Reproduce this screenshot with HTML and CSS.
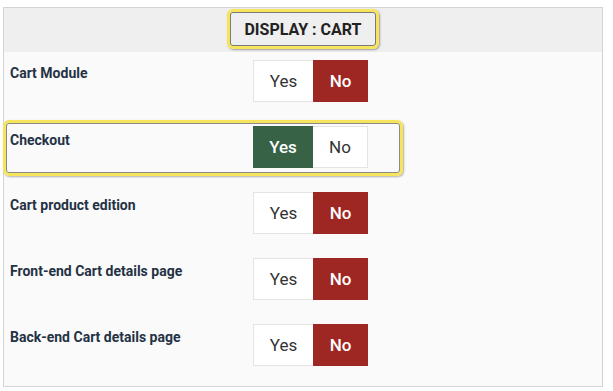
FILE: index.html
```html
<!DOCTYPE html>
<html lang="en">
<head>
    <meta charset="UTF-8">
    <meta name="viewport" content="width=device-width, initial-scale=1.0">
    <title>Display : Cart</title>
    <link rel="stylesheet" href="styles.css">
</head>
<body>
    <div class="panel">
        <div class="panel-head">
            <div class="panel-title">DISPLAY : CART</div>
        </div>

        <div class="panel-body">
            <div class="row">
                <div class="row-label">Cart Module</div>
                <div class="toggle">
                    <span class="opt">Yes</span>
                    <span class="opt opt-no on">No</span>
                </div>
            </div>

            <div class="row focus">
                <div class="row-label">Checkout</div>
                <div class="toggle">
                    <span class="opt opt-yes on">Yes</span>
                    <span class="opt opt-no">No</span>
                </div>
            </div>

            <div class="row">
                <div class="row-label">Cart product edition</div>
                <div class="toggle">
                    <span class="opt">Yes</span>
                    <span class="opt opt-no on">No</span>
                </div>
            </div>

            <div class="row">
                <div class="row-label">Front-end Cart details page</div>
                <div class="toggle">
                    <span class="opt">Yes</span>
                    <span class="opt opt-no on">No</span>
                </div>
            </div>

            <div class="row">
                <div class="row-label">Back-end Cart details page</div>
                <div class="toggle">
                    <span class="opt">Yes</span>
                    <span class="opt opt-no on">No</span>
                </div>
            </div>
        </div>
    </div>
</body>
</html>
```

FILE: styles.css
```css
body {
    margin: 0;
    background: #ffffff;
    font-family: Roboto, "Liberation Sans", Arial, sans-serif;
}
.panel {
    margin: 7px 0 0 3px;
    width: 600px;
    box-sizing: border-box;
    border: 1px solid #d4d4d4;
    background: #fafafa;
}
.panel-head {
    height: 44px;
    background: #efefef;
    display: flex;
    justify-content: center;
    align-items: flex-start;
    padding-top: 1px;
    box-sizing: border-box;
}
.panel-title {
    height: 40px;
    box-sizing: border-box;
    padding: 1px 14px 0;
    border: 3px solid #f6e45c;
    border-radius: 6px;
    box-shadow: inset 0 0 0 1px #7a7a7a, 1px 1px 2px rgba(0,0,0,0.35);
    display: flex;
    align-items: center;
    font-size: 16px;
    font-weight: 700;
    color: #222222;
}
.panel-body {
    padding-bottom: 4px;
}
.row {
    display: flex;
    align-items: flex-start;
    padding: 8px 0 16px 6px;
}
.row.focus {
    width: 400px;
    box-sizing: border-box;
    margin: 2px 0 8px -1px;
    padding: 3px 0 5px 4px;
    border: 3px solid #f6e45c;
    border-radius: 6px;
    box-shadow: inset 0 0 0 1px #8a8a8a, 1px 1px 2px rgba(0,0,0,0.3);
}
.row-label {
    width: 243px;
    padding-top: 5px;
    font-size: 14px;
    font-weight: 700;
    color: #253245;
}
.focus .row-label {
    padding-top: 6px;
}
.toggle {
    display: flex;
    height: 42px;
    box-sizing: border-box;
    border: 1px solid #e4e4e4;
    background: #ffffff;
}
.opt {
    display: flex;
    align-items: center;
    justify-content: center;
    width: 59px;
    font-size: 17px;
    color: #333333;
}
.opt-no {
    width: 54px;
}
.opt.on {
    color: #ffffff;
    font-weight: 500;
    margin: -1px 0;
}
.opt-no.on {
    background: #9e2623;
    margin-right: -1px;
    width: 55px;
}
.opt-yes.on {
    background: #386245;
    margin-left: -1px;
    width: 60px;
}
```
